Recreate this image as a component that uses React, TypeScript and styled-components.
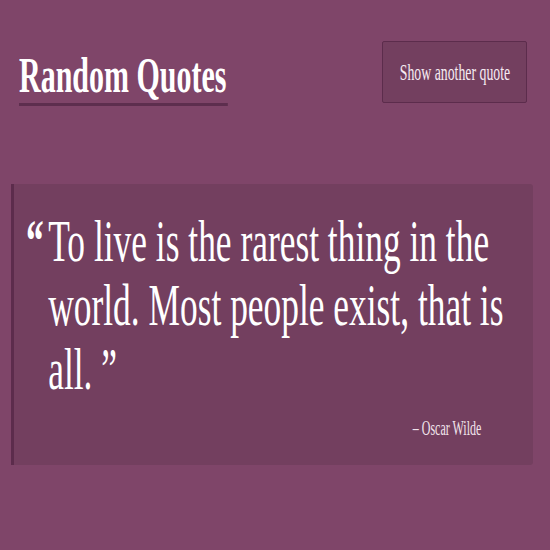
import React from "react";
import styled, { createGlobalStyle } from "styled-components";

const Global = createGlobalStyle`
  html, body { margin: 0; padding: 0; background: #7f4569; overflow: hidden; }
  body { font-family: "Liberation Serif", "Times New Roman", serif; }
`;

const Page = styled.div`
  width: 550px;
  height: 550px;
  box-sizing: border-box;
  padding: 41px 17px 0 11px;
  display: flex;
  flex-direction: column;
`;

const Header = styled.header`
  display: flex;
  justify-content: space-between;
  align-items: flex-start;
  padding: 0 6px 0 8px;
`;

/* The reference face is a tall, narrow serif; Liberation Serif compressed horizontally stands in for it. */
const Title = styled.h1`
  margin: 9px 0 0;
  font-family: "Liberation Serif", serif;
  font-weight: bold;
  font-size: 50px;
  line-height: 50px;
  color: #fff;
  white-space: nowrap;
  border-bottom: 3px solid #5d2e4e;
  padding: 0 2px 3px 0;
  transform: scaleX(0.6);
  transform-origin: left top;
`;

const Button = styled.button`
  flex: none;
  width: 145px;
  height: 62px;
  display: flex;
  align-items: center;
  justify-content: center;
  padding: 0;
  background: #733f5f;
  border: 1px solid #5c2c4c;
  border-radius: 2px;
  cursor: pointer;
`;

const Narrow = styled.span<{ $origin?: string }>`
  display: inline-block;
  white-space: nowrap;
  transform: scaleX(0.6);
  transform-origin: ${(p) => p.$origin ?? "center"};
`;

const ButtonLabel = styled(Narrow)`
  font-family: "Liberation Serif", serif;
  font-size: 23px;
  line-height: 1;
  color: #f6ebf2;
`;

const Card = styled.blockquote`
  margin: 78px 0 0;
  box-sizing: border-box;
  background: #733f5f;
  border-left: 3px solid #5c2c4c;
  border-radius: 0 3px 3px 0;
  padding: 25px 0 25px 12px;
  display: flex;
  flex-direction: column;
`;

const QuoteRow = styled.div`
  display: flex;
  align-items: flex-start;
  width: 837px;
  transform: scaleX(0.6);
  transform-origin: left top;
  color: #fff;
  font-family: "Liberation Serif", serif;
  font-size: 59px;
  line-height: 64px;
`;

const OpenMark = styled.span`
  flex: none;
  width: 37px;
  font-weight: bold;
`;

const QuoteText = styled.p`
  margin: 0;
  width: 800px;
`;

const Author = styled(Narrow)`
  align-self: flex-end;
  margin: 15px 52px 0 0;
  font-family: "Liberation Serif", serif;
  font-style: normal;
  font-size: 20px;
  line-height: 24px;
  color: #f1e4ec;
`;

export default function App() {
  return (
    <>
      <Global />
      <Page>
        <Header>
          <Title>Random Quotes</Title>
          <Button>
            <ButtonLabel>Show another quote</ButtonLabel>
          </Button>
        </Header>
        <Card>
          <QuoteRow>
            <OpenMark>“</OpenMark>
            <QuoteText>
              To live is the rarest thing in the world. Most people exist, that is all. ”
            </QuoteText>
          </QuoteRow>
          <Author as="cite" $origin="right center">
            – Oscar Wilde
          </Author>
        </Card>
      </Page>
    </>
  );
}
